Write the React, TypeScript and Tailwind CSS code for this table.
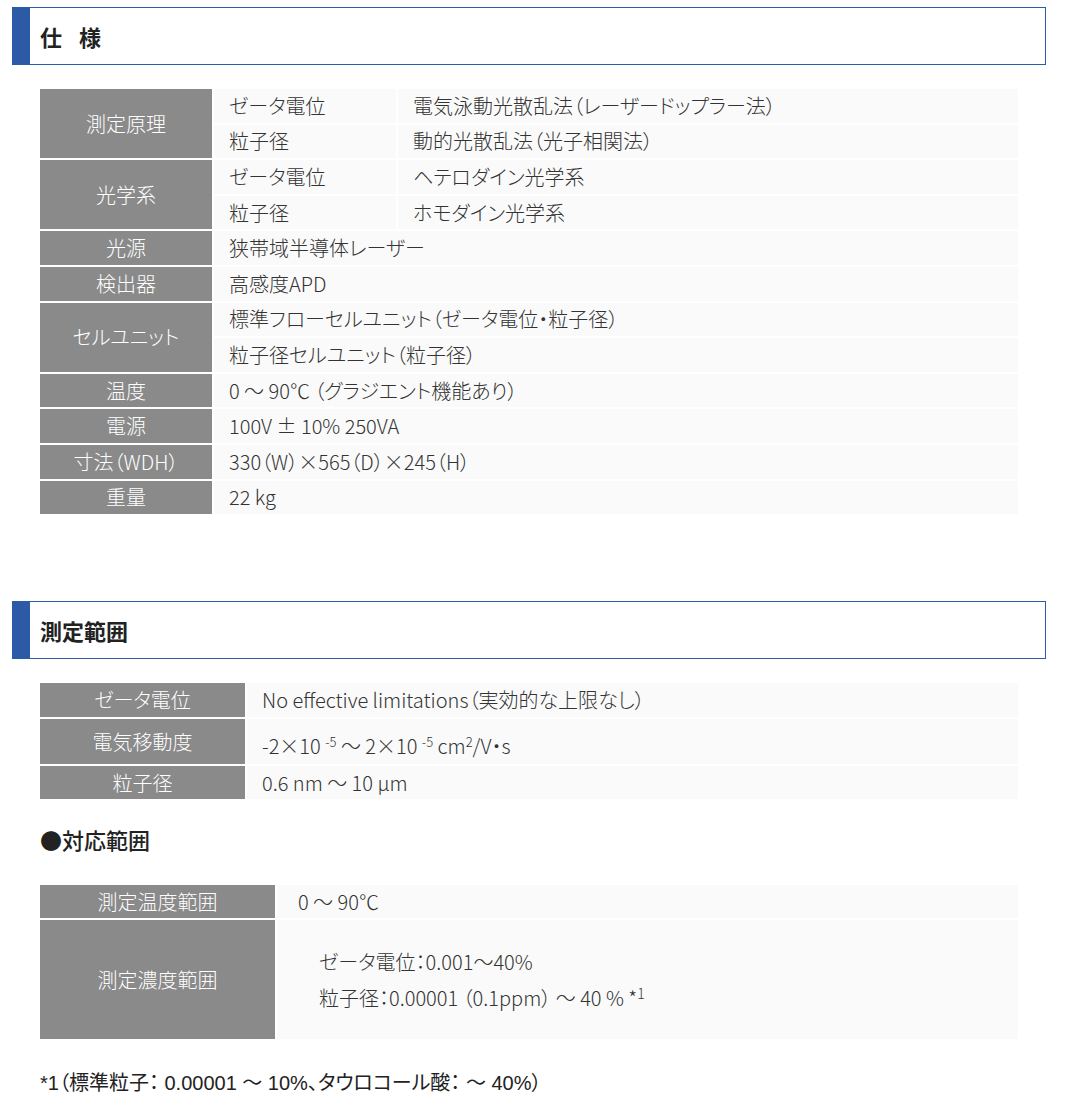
import React from 'react'

const font = { fontFamily: '"Noto Sans CJK JP", "Noto Sans", sans-serif' }

type Row = {
  label: string
  sub?: [string, string][]
  values?: string[]
}

const specRows: Row[] = [
  {
    label: '測定原理',
    sub: [
      ['ゼータ電位', '電気泳動光散乱法（レーザードップラー法）'],
      ['粒子径', '動的光散乱法（光子相関法）'],
    ],
  },
  {
    label: '光学系',
    sub: [
      ['ゼータ電位', 'ヘテロダイン光学系'],
      ['粒子径', 'ホモダイン光学系'],
    ],
  },
  { label: '光源', values: ['狭帯域半導体レーザー'] },
  { label: '検出器', values: ['高感度APD'] },
  { label: 'セルユニット', values: ['標準フローセルユニット（ゼータ電位・粒子径）', '粒子径セルユニット（粒子径）'] },
  { label: '温度', values: ['0 〜 90℃ （グラジエント機能あり）'] },
  { label: '電源', values: ['100V ± 10% 250VA'] },
  { label: '寸法（WDH）', values: ['330（W）×565（D）×245（H）'] },
  { label: '重量', values: ['22 kg'] },
]

function SectionHeader({ children }: { children: React.ReactNode }) {
  return (
    <div className="ml-[12px] w-[1034px] h-[58px] border border-[#2c5aa6] border-l-[18px] flex items-center pl-[10px]">
      <h2 className="text-[22px] font-bold text-[#222] flex gap-[17px] [font-feature-settings:'palt']">{children}</h2>
    </div>
  )
}

const labelCls = 'bg-[#8a8a8a] text-white text-center align-middle text-[20px] font-light p-0'
const cellCls = 'bg-[#fafafa] text-[#333] text-[20px] font-light pl-[15px] py-0 align-middle'

export default function App() {
  return (
    <div className="bg-white w-[1068px] min-h-[1106px] pt-[7px] [font-feature-settings:'palt']" style={font}>
      <SectionHeader>
        <span>仕</span>
        <span>様</span>
      </SectionHeader>

      {/* 仕様 */}
      <table className="mt-[22px] ml-[38px] border-separate border-spacing-[2px] w-[982px] leading-none">
        <colgroup>
          <col className="w-[172px]" />
          <col className="w-[182px]" />
          <col />
        </colgroup>
        <tbody>
          {specRows.map((r) => {
            if (r.sub) {
              return r.sub.map((s, i) => (
                <tr key={r.label + i} className="h-[33.6px]">
                  {i === 0 && (
                    <td rowSpan={r.sub!.length} className={labelCls}>
                      {r.label}
                    </td>
                  )}
                  <td className={cellCls}>{s[0]}</td>
                  <td className={cellCls}>{s[1]}</td>
                </tr>
              ))
            }
            return r.values!.map((v, i) => (
              <tr key={r.label + i} className="h-[33.6px]">
                {i === 0 && (
                  <td rowSpan={r.values!.length} className={labelCls}>
                    {r.label}
                  </td>
                )}
                <td colSpan={2} className={cellCls}>
                  {v}
                </td>
              </tr>
            ))
          })}
        </tbody>
      </table>

      <div className="mt-[85px]">
        <SectionHeader>
          <span>測定範囲</span>
        </SectionHeader>
      </div>

      {/* 測定範囲 */}
      <table className="mt-[22px] ml-[38px] border-separate border-spacing-[2px] w-[982px] leading-none">
        <colgroup>
          <col className="w-[205px]" />
          <col />
        </colgroup>
        <tbody>
          <tr className="h-[34px]">
            <td className={labelCls}>ゼータ電位</td>
            <td className={cellCls}>No effective limitations（実効的な上限なし）</td>
          </tr>
          <tr className="h-[45px]">
            <td className={labelCls}>電気移動度</td>
            <td className={cellCls + ' pt-[8px]'}>
              -2×10 <sup className="text-[13px]">-5</sup> 〜 2×10 <sup className="text-[13px]">-5</sup> cm
              <sup className="text-[13px]">2</sup>/V・s
            </td>
          </tr>
          <tr className="h-[33px]">
            <td className={labelCls}>粒子径</td>
            <td className={cellCls}>0.6 nm 〜 10 μm</td>
          </tr>
        </tbody>
      </table>

      <h3 className="mt-[22px] ml-[40px] text-[22px] font-medium text-[#222]">●対応範囲</h3>

      <table className="mt-[27px] ml-[38px] border-separate border-spacing-[2px] w-[982px] leading-none">
        <colgroup>
          <col className="w-[235px]" />
          <col />
        </colgroup>
        <tbody>
          <tr className="h-[33px]">
            <td className={labelCls}>測定温度範囲</td>
            <td className={cellCls + ' pl-[21px]'}>0 〜 90℃</td>
          </tr>
          <tr className="h-[119px]">
            <td className={labelCls}>測定濃度範囲</td>
            <td className={cellCls + ' pl-[42px] leading-[36px]'}>
              <div>ゼータ電位：0.001〜40%</div>
              <div>
                粒子径：0.00001 （0.1ppm） 〜 40 % *<sup className="text-[14px]">1</sup>
              </div>
            </td>
          </tr>
        </tbody>
      </table>

      <p
        className="mt-[27px] ml-[40px] text-[20px] text-[#222]"
        style={{ fontFamily: '"Liberation Sans", "Noto Sans CJK JP", sans-serif' }}
      >
        *1（標準粒子： 0.00001 〜 10%、タウロコール酸： 〜 40%）
      </p>
    </div>
  )
}
